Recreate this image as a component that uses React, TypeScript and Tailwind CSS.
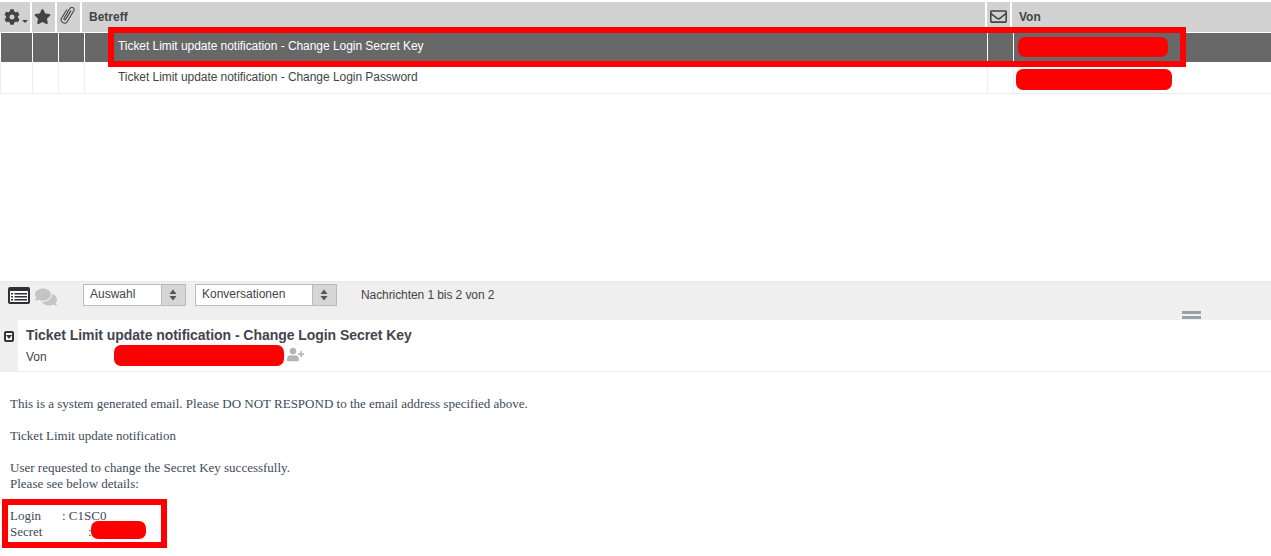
import { FaCog, FaStar, FaRegEnvelope, FaUserPlus, FaComments } from "react-icons/fa";

function Cells({ selected, height }: { selected?: boolean; height: string }) {
  const line = selected ? "border-white" : "border-[#eeeeee]";
  const bg = selected ? "bg-[#686868] text-white" : "bg-white text-[#444444]";
  const cell = `border-r ${line} shrink-0`;
  return (
    <div className={`flex ${height} ${bg} border-l ${selected ? "border-l-white" : "border-l-[#eeeeee]"} border-b ${selected ? "border-b-white" : "border-b-[#eeeeee]"}`}>
      <div className={`w-[32px] ${cell}`} />
      <div className={`w-[26px] ${cell}`} />
      <div className={`w-[26px] ${cell}`} />
      <div className={`w-[903px] pl-[33px] pr-2 flex items-center text-[12px] tracking-[-0.05px] pb-[3px] ${cell}`}>
        {selected ? "Ticket Limit update notification - Change Login Secret Key" : "Ticket Limit update notification - Change Login Password"}
      </div>
      <div className={`w-[26px] ${cell}`} />
      <div className="flex-1" />
    </div>
  );
}

function Select({ label, w }: { label: string; w: string }) {
  return (
    <div className={`${w} h-[22px] flex border border-[#bbbbbb] bg-white text-[12px] text-[#444444]`}>
      <div className="flex-1 pl-[6px] flex items-center pb-[3px]">{label}</div>
      <div className="w-[24px] bg-[#d6d6d6] border-l border-[#bbbbbb] flex items-center justify-center pr-[1px]">
        <svg width="8" height="12" viewBox="0 0 8 12">
          <path d="M4 0.5 L7.5 5 H0.5 Z M4 11.5 L0.5 7 H7.5 Z" fill="#555555" />
        </svg>
      </div>
    </div>
  );
}

export default function App() {
  return (
    <div className="relative w-[1271px] h-[556px] overflow-hidden bg-white font-['Liberation_Sans',sans-serif]">
      <div className="pt-[2px]">
        <div className="flex h-[31px] bg-[#d2d2d2] text-[#444444] text-[12px] font-bold border-b border-white">
          <div className="w-[32px] border-r-2 border-white flex items-center pl-[4px] text-[#444444]">
            <FaCog size={16} className="-mt-[1px]" />
            <svg width="6" height="3" viewBox="0 0 6 3" className="ml-[2px] mt-[8px]">
              <path d="M0 0 H6 L3 3 Z" fill="#444444" />
            </svg>
          </div>
          <div className="w-[25px] border-r-2 border-white flex items-center justify-center">
            <FaStar size={17} className="-mt-[2px] -ml-[3px]" />
          </div>
          <div className="w-[25px] border-r-2 border-white flex items-center justify-center">
            <svg width="16" height="18" viewBox="0 0 16 18" fill="none" stroke="#444444" strokeWidth="1.1" className="-mt-[4px] -ml-[4px]">
              <path d="M5 12.5 L10.5 3 C11.4 1.3 13 1 14 1.6 C15 2.2 15.4 3.6 14.5 5.2 L8 16 C7 17.4 5 17.4 3.5 16.4 C2 15.4 1.6 14 2.5 12.3 L8 3.5 M5 12.5 C4.5 13.6 5.8 14.4 6.6 13.4 L12 4.6" />
            </svg>
          </div>
          <div className="w-[905px] border-r-2 border-white flex items-center pl-[7px] pb-[1px]">Betreff</div>
          <div className="w-[25px] border-r-2 border-white flex items-center justify-center">
            <FaRegEnvelope size={17} className="-mt-[1px]" />
          </div>
          <div className="flex-1 flex items-center pl-[7px] pb-[1px]">Von</div>
        </div>
        <Cells selected height="h-[30px]" />
        <Cells height="h-[31px]" />
      </div>

      <div className="h-[187px]" />

      <div className="h-[39px] bg-[#efefef] border-t border-[#eaeae4] flex items-start relative">
        <div className="w-[83px] pt-[5px] pl-[8px] flex items-start gap-[5px]">
          <svg width="22" height="17" viewBox="0 0 22 17">
            <rect width="22" height="17" rx="2" fill="#2f2f35" />
            <rect x="2" y="4" width="18" height="11" fill="#ffffff" />
            <path d="M3 6h2v1.5H3z M3 9h2v1.5H3z M3 12h2v1.5H3z M6.5 6H19v1.5H6.5z M6.5 9H19v1.5H6.5z M6.5 12H19v1.5H6.5z" fill="#2f2f35" />
          </svg>
          <FaComments size={22} className="text-[#c4c4c4] -mt-[1px]" />
        </div>
        <div className="pt-[2px] flex items-center gap-[9px]">
          <Select label="Auswahl" w="w-[103px]" />
          <Select label="Konversationen" w="w-[142px]" />
          <span className="text-[12px] text-[#444444] ml-[15px] tracking-[-0.08px]">Nachrichten 1 bis 2 von 2</span>
        </div>
        <div className="absolute left-[1182px] top-[29px] w-[19px] h-[8px] flex flex-col justify-between">
          <div className="h-[3px] bg-[#98a0a8]" />
          <div className="h-[3px] bg-[#98a0a8]" />
        </div>
      </div>

      <div className="flex h-[52px] border-b border-[#eeeee8]">
        <div className="w-[18px] bg-[#efefef] pt-[11px] pl-[4px]">
          <div className="w-[10px] h-[11px] rounded-[2px] border-2 border-[#3a3030] bg-white flex items-center justify-center">
            <div className="w-0 h-0 border-x-[3px] border-x-transparent border-t-[4px] border-t-[#3a3030]" />
          </div>
        </div>
        <div className="pl-[8px] pt-[6px]">
          <div className="text-[14px] leading-[18px] font-bold text-[#444450] tracking-[-0.05px]">Ticket Limit update notification - Change Login Secret Key</div>
          <div className="flex items-center mt-[4px] text-[12px] leading-[18px] text-[#444444]">
            Von
            <FaUserPlus size={17} className="ml-[240px] -mt-[5px] text-[#b4b4b4]" />
          </div>
        </div>
      </div>

      <div className="pl-[10px] pt-[24px] font-['Liberation_Serif',serif] text-[13px] leading-[16px] text-[#3c4a5a]">
        <p>This is a system generated email. Please DO NOT RESPOND to the email address specified above.</p>
        <p className="mt-[16px]">Ticket Limit update notification</p>
        <p className="mt-[16px]">User requested to change the Secret Key successfully.<br />Please see below details:</p>
        <div className="mt-[16px]">
          <div className="flex"><span className="w-[52px]">Login</span><span>: C1SC0</span></div>
          <div className="flex"><span className="w-[78px]">Secret</span><span>:</span></div>
        </div>
      </div>

      {/* redaction marks drawn over the screenshot */}
      <div className="absolute left-[108px] top-[27px] w-[1078px] h-[40px] border-[6px] border-[#ff0000]" />
      <div className="absolute left-[1018px] top-[37px] w-[150px] h-[20px] rounded-[7px] bg-[#ff0000]" />
      <div className="absolute left-[1016px] top-[69px] w-[156px] h-[21px] rounded-[7px] bg-[#ff0000]" />
      <div className="absolute left-[114px] top-[345px] w-[170px] h-[21px] rounded-[7px] bg-[#ff0000]" />
      <div className="absolute left-[2px] top-[499px] w-[165px] h-[49px] border-[6px] border-[#ff0000]" />
      <div className="absolute left-[91px] top-[521px] w-[55px] h-[18px] rounded-[7px] bg-[#ff0000]" />
    </div>
  );
}
